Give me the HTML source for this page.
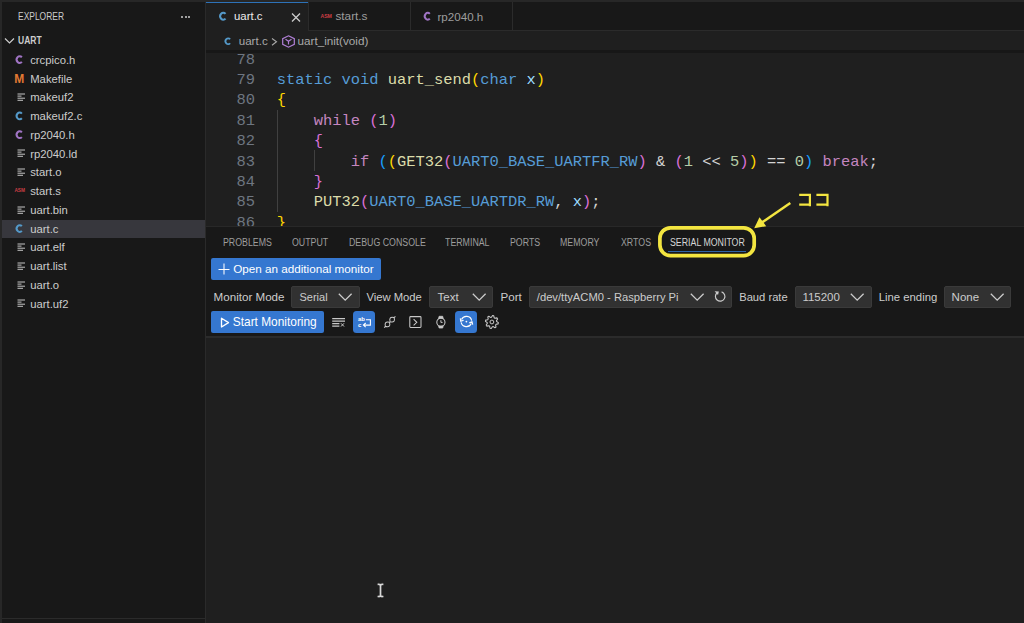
<!DOCTYPE html>
<html><head><meta charset="utf-8">
<style>
*{margin:0;padding:0;box-sizing:border-box}
html,body{width:1024px;height:623px;overflow:hidden;background:#272727;font-family:"Liberation Sans",sans-serif;color:#cccccc}
.a{position:absolute}
.t{position:absolute;white-space:pre;line-height:1}
svg{position:absolute;overflow:visible}
</style></head><body>

<div class="a" style="left:1.5px;top:2px;width:203.5px;height:621px;background:#181818;"></div>
<div class="a" style="left:204.6px;top:2px;width:2px;height:621px;background:#2a2a2a;"></div>
<div class="a" style="left:206px;top:2px;width:818px;height:29px;background:#181818;"></div>
<div class="a" style="left:206px;top:30px;width:818px;height:1px;background:#2b2b2b;"></div>
<div class="a" style="left:206px;top:31px;width:818px;height:196px;background:#1f1f1f;"></div>
<div class="a" style="left:206px;top:227px;width:818px;height:396px;background:#181818;"></div>
<div class="a" style="left:206px;top:225.9px;width:818px;height:1.6px;background:#282828;"></div>
<div class="t" style="left:18.00px;top:11.54px;font-size:10px;color:#cccccc;font-weight:400;font-family:'Liberation Sans',sans-serif;transform:scaleX(0.845);transform-origin:0 0;">EXPLORER</div>
<div class="a" style="left:181.0px;top:16px;width:2px;height:2px;border-radius:1px;background:#cccccc"></div>
<div class="a" style="left:184.7px;top:16px;width:2px;height:2px;border-radius:1px;background:#cccccc"></div>
<div class="a" style="left:188.2px;top:16px;width:2px;height:2px;border-radius:1px;background:#cccccc"></div>
<svg style="left:4px;top:37px" width="12" height="8"><path d="M1 1.5 L5.5 6 L10 1.5" fill="none" stroke="#cccccc" stroke-width="1.2"/></svg>
<div class="t" style="left:18.00px;top:35.94px;font-size:10px;color:#cccccc;font-weight:700;font-family:'Liberation Sans',sans-serif;transform:scaleX(0.85);transform-origin:0 0;">UART</div>
<div class="t" style="left:30.20px;top:54.73px;font-size:11.3px;color:#cccccc;font-weight:400;font-family:'Liberation Sans',sans-serif;">crcpico.h</div>
<svg style="left:0;top:0" width="1024" height="623"><path d="M21.86 57.24 A3.0 3.4 0 1 0 21.86 61.96" fill="none" stroke="#a074c4" stroke-width="2.0"/></svg>
<div class="t" style="left:30.20px;top:73.50px;font-size:11.3px;color:#cccccc;font-weight:400;font-family:'Liberation Sans',sans-serif;">Makefile</div>
<div class="t" style="left:14.20px;top:73.41px;font-size:12px;color:#e37933;font-weight:700;font-family:'Liberation Sans',sans-serif;">M</div>
<div class="t" style="left:30.20px;top:92.27px;font-size:11.3px;color:#cccccc;font-weight:400;font-family:'Liberation Sans',sans-serif;">makeuf2</div>
<svg style="left:17px;top:92.8px" width="9" height="9"><path d="M0.5 1h7.5M0.5 3.1h4M0.5 5.2h7.5M0.5 7.3h5.5" stroke="#c5c5c5" stroke-width="1"/></svg>
<div class="t" style="left:30.20px;top:111.04px;font-size:11.3px;color:#cccccc;font-weight:400;font-family:'Liberation Sans',sans-serif;">makeuf2.c</div>
<svg style="left:0;top:0" width="1024" height="623"><path d="M21.86 113.55 A3.0 3.4 0 1 0 21.86 118.27" fill="none" stroke="#5499c9" stroke-width="2.0"/></svg>
<div class="t" style="left:30.20px;top:129.81px;font-size:11.3px;color:#cccccc;font-weight:400;font-family:'Liberation Sans',sans-serif;">rp2040.h</div>
<svg style="left:0;top:0" width="1024" height="623"><path d="M21.86 132.32 A3.0 3.4 0 1 0 21.86 137.04" fill="none" stroke="#a074c4" stroke-width="2.0"/></svg>
<div class="t" style="left:30.20px;top:148.58px;font-size:11.3px;color:#cccccc;font-weight:400;font-family:'Liberation Sans',sans-serif;">rp2040.ld</div>
<svg style="left:17px;top:149.1px" width="9" height="9"><path d="M0.5 1h7.5M0.5 3.1h4M0.5 5.2h7.5M0.5 7.3h5.5" stroke="#c5c5c5" stroke-width="1"/></svg>
<div class="t" style="left:30.20px;top:167.35px;font-size:11.3px;color:#cccccc;font-weight:400;font-family:'Liberation Sans',sans-serif;">start.o</div>
<svg style="left:17px;top:167.9px" width="9" height="9"><path d="M0.5 1h7.5M0.5 3.1h4M0.5 5.2h7.5M0.5 7.3h5.5" stroke="#c5c5c5" stroke-width="1"/></svg>
<div class="t" style="left:30.20px;top:186.12px;font-size:11.3px;color:#cccccc;font-weight:400;font-family:'Liberation Sans',sans-serif;">start.s</div>
<div class="t" style="left:14.40px;top:189.03px;font-size:4.8px;color:#cc3e44;font-weight:700;font-family:'Liberation Sans',sans-serif;">ASM</div>
<div class="t" style="left:30.20px;top:204.89px;font-size:11.3px;color:#cccccc;font-weight:400;font-family:'Liberation Sans',sans-serif;">uart.bin</div>
<svg style="left:17px;top:205.5px" width="9" height="9"><path d="M0.5 1h7.5M0.5 3.1h4M0.5 5.2h7.5M0.5 7.3h5.5" stroke="#c5c5c5" stroke-width="1"/></svg>
<div class="a" style="left:2px;top:219.5px;width:203px;height:18.5px;background:#37373d;"></div>
<div class="t" style="left:30.20px;top:223.66px;font-size:11.3px;color:#cccccc;font-weight:400;font-family:'Liberation Sans',sans-serif;">uart.c</div>
<svg style="left:0;top:0" width="1024" height="623"><path d="M21.86 226.17 A3.0 3.4 0 1 0 21.86 230.89" fill="none" stroke="#5499c9" stroke-width="2.0"/></svg>
<div class="t" style="left:30.20px;top:242.43px;font-size:11.3px;color:#cccccc;font-weight:400;font-family:'Liberation Sans',sans-serif;">uart.elf</div>
<svg style="left:17px;top:243.0px" width="9" height="9"><path d="M0.5 1h7.5M0.5 3.1h4M0.5 5.2h7.5M0.5 7.3h5.5" stroke="#c5c5c5" stroke-width="1"/></svg>
<div class="t" style="left:30.20px;top:261.20px;font-size:11.3px;color:#cccccc;font-weight:400;font-family:'Liberation Sans',sans-serif;">uart.list</div>
<svg style="left:17px;top:261.8px" width="9" height="9"><path d="M0.5 1h7.5M0.5 3.1h4M0.5 5.2h7.5M0.5 7.3h5.5" stroke="#c5c5c5" stroke-width="1"/></svg>
<div class="t" style="left:30.20px;top:279.97px;font-size:11.3px;color:#cccccc;font-weight:400;font-family:'Liberation Sans',sans-serif;">uart.o</div>
<svg style="left:17px;top:280.5px" width="9" height="9"><path d="M0.5 1h7.5M0.5 3.1h4M0.5 5.2h7.5M0.5 7.3h5.5" stroke="#c5c5c5" stroke-width="1"/></svg>
<div class="t" style="left:30.20px;top:298.74px;font-size:11.3px;color:#cccccc;font-weight:400;font-family:'Liberation Sans',sans-serif;">uart.uf2</div>
<svg style="left:17px;top:299.3px" width="9" height="9"><path d="M0.5 1h7.5M0.5 3.1h4M0.5 5.2h7.5M0.5 7.3h5.5" stroke="#c5c5c5" stroke-width="1"/></svg>
<div class="a" style="left:206px;top:2px;width:101.5px;height:29px;background:#1f1f1f;"></div>
<div class="a" style="left:206px;top:1.5px;width:101.5px;height:1.5px;background:#2d72b8;"></div>
<div class="a" style="left:307.5px;top:2px;width:1px;height:28px;background:#2b2b2b;"></div>
<div class="a" style="left:410px;top:2px;width:1px;height:28px;background:#2b2b2b;"></div>
<div class="a" style="left:511.5px;top:2px;width:1px;height:28px;background:#2b2b2b;"></div>
<svg style="left:0;top:0" width="1024" height="623"><path d="M225.53 13.82 A3.1 3.5 0 1 0 225.53 18.68" fill="none" stroke="#5499c9" stroke-width="2.0"/></svg>
<div class="t" style="left:234.00px;top:11.25px;font-size:11.4px;color:#ececec;font-weight:400;font-family:'Liberation Sans',sans-serif;">uart.c</div>
<svg style="left:291px;top:12.5px" width="10" height="9"><path d="M1 0.5 L9 8.5 M9 0.5 L1 8.5" stroke="#cccccc" stroke-width="1.3"/></svg>
<div class="t" style="left:320.40px;top:14.00px;font-size:5.2px;color:#cc3e44;font-weight:700;font-family:'Liberation Sans',sans-serif;">ASM</div>
<div class="t" style="left:335.40px;top:10.91px;font-size:11.8px;color:#9d9d9d;font-weight:400;font-family:'Liberation Sans',sans-serif;">start.s</div>
<svg style="left:0;top:0" width="1024" height="623"><path d="M429.79 13.89 A2.9 3.4 0 1 0 429.79 18.61" fill="none" stroke="#a074c4" stroke-width="2.0"/></svg>
<div class="t" style="left:437.50px;top:11.08px;font-size:11.6px;color:#9d9d9d;font-weight:400;font-family:'Liberation Sans',sans-serif;">rp2040.h</div>
<svg style="left:0;top:0" width="1024" height="623"><path d="M230.14 39.24 A2.7 2.9 0 1 0 230.14 43.26" fill="none" stroke="#5499c9" stroke-width="1.8"/></svg>
<div class="t" style="left:238.70px;top:34.88px;font-size:11.6px;color:#a9a9a9;font-weight:400;font-family:'Liberation Sans',sans-serif;">uart.c</div>
<svg style="left:271px;top:38px" width="7" height="8"><path d="M1 0.5 L5.5 3.8 L1 7.2" fill="none" stroke="#a9a9a9" stroke-width="1.1"/></svg>
<svg style="left:281.5px;top:34.5px" width="14" height="13"><path d="M6.5 0.8 L12.3 3.6 L12.3 9.4 L6.5 12.2 L0.7 9.4 L0.7 3.6 Z" fill="none" stroke="#b180d7" stroke-width="1.2"/><path d="M3.5 4.3 L6.5 6.3 L9.5 4.3 M6.5 6.3 L6.5 9.5" fill="none" stroke="#b180d7" stroke-width="1.2"/></svg>
<div class="t" style="left:297.50px;top:34.80px;font-size:11.7px;color:#a9a9a9;font-weight:400;font-family:'Liberation Sans',sans-serif;">uart_init(void)</div>
<div class="a" style="left:206px;top:49.5px;width:818px;height:3px;background:#161616;opacity:0.9"></div>
<div class="t" style="left:236.50px;top:52.68px;font-size:15.42px;color:#6e7681;font-weight:400;font-family:'Liberation Mono',monospace;">78</div>
<div class="t" style="left:236.50px;top:73.08px;font-size:15.42px;color:#6e7681;font-weight:400;font-family:'Liberation Mono',monospace;">79</div>
<div class="t" style="left:276.80px;top:73.08px;font-size:15.42px;color:#569cd6;font-weight:400;font-family:'Liberation Mono',monospace;">static</div>
<div class="t" style="left:341.55px;top:73.08px;font-size:15.42px;color:#569cd6;font-weight:400;font-family:'Liberation Mono',monospace;">void</div>
<div class="t" style="left:387.80px;top:73.08px;font-size:15.42px;color:#dcdcaa;font-weight:400;font-family:'Liberation Mono',monospace;">uart_send</div>
<div class="t" style="left:471.05px;top:73.08px;font-size:15.42px;color:#ffd700;font-weight:400;font-family:'Liberation Mono',monospace;">(</div>
<div class="t" style="left:480.30px;top:73.08px;font-size:15.42px;color:#569cd6;font-weight:400;font-family:'Liberation Mono',monospace;">char</div>
<div class="t" style="left:526.55px;top:73.08px;font-size:15.42px;color:#9cdcfe;font-weight:400;font-family:'Liberation Mono',monospace;">x</div>
<div class="t" style="left:535.80px;top:73.08px;font-size:15.42px;color:#ffd700;font-weight:400;font-family:'Liberation Mono',monospace;">)</div>
<div class="t" style="left:236.50px;top:93.48px;font-size:15.42px;color:#6e7681;font-weight:400;font-family:'Liberation Mono',monospace;">80</div>
<div class="t" style="left:276.80px;top:93.48px;font-size:15.42px;color:#ffd700;font-weight:400;font-family:'Liberation Mono',monospace;">{</div>
<div class="t" style="left:236.50px;top:113.88px;font-size:15.42px;color:#6e7681;font-weight:400;font-family:'Liberation Mono',monospace;">81</div>
<div class="t" style="left:313.80px;top:113.88px;font-size:15.42px;color:#c586c0;font-weight:400;font-family:'Liberation Mono',monospace;">while</div>
<div class="t" style="left:369.30px;top:113.88px;font-size:15.42px;color:#da70d6;font-weight:400;font-family:'Liberation Mono',monospace;">(</div>
<div class="t" style="left:378.55px;top:113.88px;font-size:15.42px;color:#b5cea8;font-weight:400;font-family:'Liberation Mono',monospace;">1</div>
<div class="t" style="left:387.80px;top:113.88px;font-size:15.42px;color:#da70d6;font-weight:400;font-family:'Liberation Mono',monospace;">)</div>
<div class="t" style="left:236.50px;top:134.28px;font-size:15.42px;color:#6e7681;font-weight:400;font-family:'Liberation Mono',monospace;">82</div>
<div class="t" style="left:313.80px;top:134.28px;font-size:15.42px;color:#da70d6;font-weight:400;font-family:'Liberation Mono',monospace;">{</div>
<div class="t" style="left:236.50px;top:154.68px;font-size:15.42px;color:#6e7681;font-weight:400;font-family:'Liberation Mono',monospace;">83</div>
<div class="t" style="left:350.80px;top:154.68px;font-size:15.42px;color:#c586c0;font-weight:400;font-family:'Liberation Mono',monospace;">if</div>
<div class="t" style="left:378.55px;top:154.68px;font-size:15.42px;color:#179fff;font-weight:400;font-family:'Liberation Mono',monospace;">(</div>
<div class="t" style="left:387.80px;top:154.68px;font-size:15.42px;color:#ffd700;font-weight:400;font-family:'Liberation Mono',monospace;">(</div>
<div class="t" style="left:397.05px;top:154.68px;font-size:15.42px;color:#dcdcaa;font-weight:400;font-family:'Liberation Mono',monospace;">GET32</div>
<div class="t" style="left:443.30px;top:154.68px;font-size:15.42px;color:#da70d6;font-weight:400;font-family:'Liberation Mono',monospace;">(</div>
<div class="t" style="left:452.55px;top:154.68px;font-size:15.42px;color:#569cd6;font-weight:400;font-family:'Liberation Mono',monospace;">UART0_BASE_UARTFR_RW</div>
<div class="t" style="left:637.55px;top:154.68px;font-size:15.42px;color:#da70d6;font-weight:400;font-family:'Liberation Mono',monospace;">)</div>
<div class="t" style="left:656.05px;top:154.68px;font-size:15.42px;color:#d4d4d4;font-weight:400;font-family:'Liberation Mono',monospace;">&amp;</div>
<div class="t" style="left:674.55px;top:154.68px;font-size:15.42px;color:#da70d6;font-weight:400;font-family:'Liberation Mono',monospace;">(</div>
<div class="t" style="left:683.80px;top:154.68px;font-size:15.42px;color:#b5cea8;font-weight:400;font-family:'Liberation Mono',monospace;">1</div>
<div class="t" style="left:702.30px;top:154.68px;font-size:15.42px;color:#d4d4d4;font-weight:400;font-family:'Liberation Mono',monospace;">&lt;&lt;</div>
<div class="t" style="left:730.05px;top:154.68px;font-size:15.42px;color:#b5cea8;font-weight:400;font-family:'Liberation Mono',monospace;">5</div>
<div class="t" style="left:739.30px;top:154.68px;font-size:15.42px;color:#da70d6;font-weight:400;font-family:'Liberation Mono',monospace;">)</div>
<div class="t" style="left:748.55px;top:154.68px;font-size:15.42px;color:#ffd700;font-weight:400;font-family:'Liberation Mono',monospace;">)</div>
<div class="t" style="left:767.05px;top:154.68px;font-size:15.42px;color:#d4d4d4;font-weight:400;font-family:'Liberation Mono',monospace;">==</div>
<div class="t" style="left:794.80px;top:154.68px;font-size:15.42px;color:#b5cea8;font-weight:400;font-family:'Liberation Mono',monospace;">0</div>
<div class="t" style="left:804.05px;top:154.68px;font-size:15.42px;color:#179fff;font-weight:400;font-family:'Liberation Mono',monospace;">)</div>
<div class="t" style="left:822.55px;top:154.68px;font-size:15.42px;color:#c586c0;font-weight:400;font-family:'Liberation Mono',monospace;">break</div>
<div class="t" style="left:868.80px;top:154.68px;font-size:15.42px;color:#d4d4d4;font-weight:400;font-family:'Liberation Mono',monospace;">;</div>
<div class="t" style="left:236.50px;top:175.08px;font-size:15.42px;color:#6e7681;font-weight:400;font-family:'Liberation Mono',monospace;">84</div>
<div class="t" style="left:313.80px;top:175.08px;font-size:15.42px;color:#da70d6;font-weight:400;font-family:'Liberation Mono',monospace;">}</div>
<div class="t" style="left:236.50px;top:195.48px;font-size:15.42px;color:#6e7681;font-weight:400;font-family:'Liberation Mono',monospace;">85</div>
<div class="t" style="left:313.80px;top:195.48px;font-size:15.42px;color:#dcdcaa;font-weight:400;font-family:'Liberation Mono',monospace;">PUT32</div>
<div class="t" style="left:360.05px;top:195.48px;font-size:15.42px;color:#da70d6;font-weight:400;font-family:'Liberation Mono',monospace;">(</div>
<div class="t" style="left:369.30px;top:195.48px;font-size:15.42px;color:#569cd6;font-weight:400;font-family:'Liberation Mono',monospace;">UART0_BASE_UARTDR_RW</div>
<div class="t" style="left:554.30px;top:195.48px;font-size:15.42px;color:#d4d4d4;font-weight:400;font-family:'Liberation Mono',monospace;">,</div>
<div class="t" style="left:572.80px;top:195.48px;font-size:15.42px;color:#9cdcfe;font-weight:400;font-family:'Liberation Mono',monospace;">x</div>
<div class="t" style="left:582.05px;top:195.48px;font-size:15.42px;color:#da70d6;font-weight:400;font-family:'Liberation Mono',monospace;">)</div>
<div class="t" style="left:591.30px;top:195.48px;font-size:15.42px;color:#d4d4d4;font-weight:400;font-family:'Liberation Mono',monospace;">;</div>
<div class="t" style="left:236.50px;top:215.88px;font-size:15.42px;color:#6e7681;font-weight:400;font-family:'Liberation Mono',monospace;">86</div>
<div class="t" style="left:276.80px;top:215.88px;font-size:15.42px;color:#ffd700;font-weight:400;font-family:'Liberation Mono',monospace;">}</div>
<div class="a" style="left:277px;top:109.5px;width:1px;height:102px;background:#404040;"></div>
<div class="a" style="left:313.5px;top:150.3px;width:1px;height:20.4px;background:#404040;"></div>
<div class="a" style="left:206px;top:227px;width:818px;height:396px;background:#181818;"></div>
<div class="a" style="left:206px;top:225.9px;width:818px;height:1.6px;background:#282828;"></div>
<div class="t" style="left:223.20px;top:237.63px;font-size:10px;color:#9d9d9d;font-weight:400;font-family:'Liberation Sans',sans-serif;transform:scaleX(0.88);transform-origin:0 0;">PROBLEMS</div>
<div class="t" style="left:292.00px;top:237.63px;font-size:10px;color:#9d9d9d;font-weight:400;font-family:'Liberation Sans',sans-serif;transform:scaleX(0.88);transform-origin:0 0;">OUTPUT</div>
<div class="t" style="left:348.60px;top:237.63px;font-size:10px;color:#9d9d9d;font-weight:400;font-family:'Liberation Sans',sans-serif;transform:scaleX(0.88);transform-origin:0 0;">DEBUG CONSOLE</div>
<div class="t" style="left:444.70px;top:237.63px;font-size:10px;color:#9d9d9d;font-weight:400;font-family:'Liberation Sans',sans-serif;transform:scaleX(0.88);transform-origin:0 0;">TERMINAL</div>
<div class="t" style="left:510.00px;top:237.63px;font-size:10px;color:#9d9d9d;font-weight:400;font-family:'Liberation Sans',sans-serif;transform:scaleX(0.88);transform-origin:0 0;">PORTS</div>
<div class="t" style="left:559.60px;top:237.63px;font-size:10px;color:#9d9d9d;font-weight:400;font-family:'Liberation Sans',sans-serif;transform:scaleX(0.88);transform-origin:0 0;">MEMORY</div>
<div class="t" style="left:620.80px;top:237.63px;font-size:10px;color:#9d9d9d;font-weight:400;font-family:'Liberation Sans',sans-serif;transform:scaleX(0.88);transform-origin:0 0;">XRTOS</div>
<div class="t" style="left:669.80px;top:237.63px;font-size:10px;color:#d6d6d6;font-weight:400;font-family:'Liberation Sans',sans-serif;transform:scaleX(0.88);transform-origin:0 0;">SERIAL MONITOR</div>
<div class="a" style="left:668px;top:250.8px;width:78px;height:1.3px;background:#2d63a6;"></div>
<div class="a" style="left:211.3px;top:258.4px;width:169.4px;height:21.4px;background:#3577d0;border-radius:2px"></div>
<svg style="left:218px;top:262.5px" width="12" height="12"><path d="M6 0.5 V11.5 M0.5 6.5 H11.5" stroke="#ffffff" stroke-width="1.05"/></svg>
<div class="t" style="left:233.20px;top:263.30px;font-size:11.7px;color:#ffffff;font-weight:400;font-family:'Liberation Sans',sans-serif;">Open an additional monitor</div>
<div class="t" style="left:213.60px;top:291.28px;font-size:11.6px;color:#cccccc;font-weight:400;font-family:'Liberation Sans',sans-serif;">Monitor Mode</div>
<div class="a" style="left:290.9px;top:285.5px;width:68.80000000000001px;height:22.4px;background:#313131;border-radius:2px;border:1px solid #3a3a3a"></div>
<div class="t" style="left:299.50px;top:292.29px;font-size:11.0px;color:#cccccc;font-weight:400;font-family:'Liberation Sans',sans-serif;">Serial</div>
<svg style="left:337.6px;top:292.8px" width="15" height="9"><path d="M0.8 0.8 L7.2 7.2 L13.6 0.8" fill="none" stroke="#cccccc" stroke-width="1.3"/></svg>
<div class="t" style="left:366.40px;top:291.57px;font-size:11.26px;color:#cccccc;font-weight:400;font-family:'Liberation Sans',sans-serif;">View Mode</div>
<div class="a" style="left:429.2px;top:285.5px;width:64.30000000000001px;height:22.4px;background:#313131;border-radius:2px;border:1px solid #3a3a3a"></div>
<div class="t" style="left:437.60px;top:291.87px;font-size:11.5px;color:#cccccc;font-weight:400;font-family:'Liberation Sans',sans-serif;">Text</div>
<svg style="left:471.7px;top:292.8px" width="15" height="9"><path d="M0.8 0.8 L7.2 7.2 L13.6 0.8" fill="none" stroke="#cccccc" stroke-width="1.3"/></svg>
<div class="t" style="left:500.50px;top:291.28px;font-size:11.6px;color:#cccccc;font-weight:400;font-family:'Liberation Sans',sans-serif;">Port</div>
<div class="a" style="left:529px;top:285.5px;width:203.20000000000005px;height:22.4px;background:#313131;border-radius:2px;border:1px solid #3a3a3a"></div>
<div class="t" style="left:536.80px;top:292.12px;font-size:11.2px;color:#cccccc;font-weight:400;font-family:'Liberation Sans',sans-serif;">/dev/ttyACM0 - Raspberry Pi</div>
<svg style="left:689.5px;top:292.8px" width="15" height="9"><path d="M0.8 0.8 L7.2 7.2 L13.6 0.8" fill="none" stroke="#cccccc" stroke-width="1.3"/></svg>
<svg style="left:0;top:0" width="1024" height="623"><path d="M721.6 291.9 A4.75 4.75 0 1 1 717.2 292.7" fill="none" stroke="#cccccc" stroke-width="1.15"/><path d="M714.6 291.2 L718.9 291.4 L718.0 294.9 Z" fill="#cccccc"/></svg>
<div class="t" style="left:739.20px;top:291.62px;font-size:11.2px;color:#cccccc;font-weight:400;font-family:'Liberation Sans',sans-serif;">Baud rate</div>
<div class="a" style="left:795.2px;top:285.5px;width:76.89999999999998px;height:22.4px;background:#313131;border-radius:2px;border:1px solid #3a3a3a"></div>
<div class="t" style="left:802.40px;top:291.87px;font-size:11.5px;color:#cccccc;font-weight:400;font-family:'Liberation Sans',sans-serif;">115200</div>
<svg style="left:850.4px;top:292.8px" width="15" height="9"><path d="M0.8 0.8 L7.2 7.2 L13.6 0.8" fill="none" stroke="#cccccc" stroke-width="1.3"/></svg>
<div class="t" style="left:878.70px;top:291.51px;font-size:11.33px;color:#cccccc;font-weight:400;font-family:'Liberation Sans',sans-serif;">Line ending</div>
<div class="a" style="left:943.9px;top:285.5px;width:67.5px;height:22.4px;background:#313131;border-radius:2px;border:1px solid #3a3a3a"></div>
<div class="t" style="left:951.60px;top:291.87px;font-size:11.5px;color:#cccccc;font-weight:400;font-family:'Liberation Sans',sans-serif;">None</div>
<svg style="left:989.6px;top:292.8px" width="15" height="9"><path d="M0.8 0.8 L7.2 7.2 L13.6 0.8" fill="none" stroke="#cccccc" stroke-width="1.3"/></svg>
<div class="a" style="left:211.25px;top:310.9px;width:112.5px;height:22.2px;background:#3577d0;border-radius:2px"></div>
<div class="t" style="left:232.80px;top:316.83px;font-size:11.9px;color:#ffffff;font-weight:400;font-family:'Liberation Sans',sans-serif;">Start Monitoring</div>
<div class="a" style="left:353px;top:311px;width:22px;height:22px;background:#3577d0;border-radius:3.5px"></div>
<div class="a" style="left:455px;top:311px;width:22px;height:22px;background:#3577d0;border-radius:3.5px"></div>
<svg style="left:0;top:0" width="1024" height="623"><path d="M221.5 318.2 L228.5 322.6 L221.5 327 Z" fill="none" stroke="#fff" stroke-width="1.35" stroke-linejoin="round"/><path d="M332.2 318.6 H345 M332.2 321.1 H345 M332.2 323.6 H339.4 M332.2 326.1 H339.4" stroke="#c8c8c8" stroke-width="1.1"/><path d="M341 323.3 L344 326.5 M344 323.3 L341 326.5" stroke="#c8c8c8" stroke-width="1"/><text x="357.9" y="321.3" font-size="6" font-family="Liberation Sans" font-weight="700" fill="#fff">ab</text><text x="357.9" y="326.8" font-size="6" font-family="Liberation Sans" font-weight="700" fill="#fff">c</text><path d="M366 319.7 H370.4 V325.1 H363.6 M365.7 323 L363.4 325.1 L365.7 327.2" fill="none" stroke="#fff" stroke-width="1.1"/><path d="M390.08 321.72 Q388.60 316.13 394.18 317.62 Q395.67 323.20 390.08 321.72 Z M394.18 317.62 L395.39 316.41 M389.52 322.28 Q383.93 320.80 385.42 326.38 Q391.00 327.87 389.52 322.28 Z M385.42 326.38 L384.21 327.59 " fill="none" stroke="#c8c8c8" stroke-width="1.05"/><rect x="409.8" y="316.6" width="11.2" height="10.8" rx="0.8" fill="none" stroke="#c8c8c8" stroke-width="1.05"/><path d="M413.6 319.2 L416.8 322.3 L413.6 325.4" fill="none" stroke="#c8c8c8" stroke-width="1.05"/><circle cx="440.9" cy="322.2" r="4.1" fill="none" stroke="#c8c8c8" stroke-width="1.05"/><path d="M438.6 318.6 L439.1 316.3 H442.7 L443.2 318.6 M438.6 325.8 L439.1 328 H442.7 L443.2 325.8" fill="#c8c8c8" stroke="#c8c8c8" stroke-width="0.8"/><path d="M440.9 320.2 V322.4 H442.6" fill="none" stroke="#c8c8c8" stroke-width="1"/><path d="M461.5 319.6 A5.4 5.4 0 0 1 471.7 320.6 M471.3 323.4 A5.4 5.4 0 0 1 461.1 322.4" fill="none" stroke="#fff" stroke-width="1.15"/><path d="M460.3 318.3 L460.8 321.3 L463.6 320.3 M472.7 324.7 L472.0 321.8 L469.3 322.9" fill="none" stroke="#fff" stroke-width="1.15"/><circle cx="466.4" cy="321.6" r="0.9" fill="#fff"/><path d="M491.43,317.22 L492.54,315.53 L493.79,315.78 L494.16,317.77 L494.95,318.29 L496.92,317.88 L497.63,318.94 L496.49,320.61 L496.68,321.53 L498.37,322.64 L498.12,323.89 L496.13,324.26 L495.61,325.05 L496.02,327.02 L494.96,327.73 L493.29,326.59 L492.37,326.78 L491.26,328.47 L490.01,328.22 L489.64,326.23 L488.85,325.71 L486.88,326.12 L486.17,325.06 L487.31,323.39 L487.12,322.47 L485.43,321.36 L485.68,320.11 L487.67,319.74 L488.19,318.95 L487.78,316.98 L488.84,316.27 L490.51,317.41 Z" fill="none" stroke="#c8c8c8" stroke-width="1.05" stroke-linejoin="round"/><circle cx="491.9" cy="322" r="1.9" fill="none" stroke="#c8c8c8" stroke-width="1"/></svg>
<div class="a" style="left:206px;top:336.2px;width:818px;height:1.5px;background:#2b2b2b;"></div>
<div class="a" style="left:206px;top:337.7px;width:818px;height:285.3px;background:#1f1f1f;"></div>
<div class="a" style="left:2px;top:617.5px;width:203px;height:1.5px;background:#2b2b2b;"></div>
<svg style="left:0;top:0" width="1024" height="623"><path d="M378.3 584.3 Q380.5 584.3 380.5 586 V595 Q380.5 596.6 378.3 596.6 M382.7 584.3 Q380.5 584.3 380.5 586 M382.7 596.6 Q380.5 596.6 380.5 595" fill="none" stroke="#3a3a3a" stroke-width="3" stroke-linecap="round"/><path d="M378.3 584.3 Q380.5 584.3 380.5 586 V595 Q380.5 596.6 378.3 596.6 M382.7 584.3 Q380.5 584.3 380.5 586 M382.7 596.6 Q380.5 596.6 380.5 595" fill="none" stroke="#d8d8d8" stroke-width="1.5" stroke-linecap="round"/></svg>
<svg style="left:0;top:0" width="1024" height="623"><rect x="659.9" y="227.8" width="94.3" height="27.8" rx="10.5" ry="10.5" fill="none" stroke="#f3e540" stroke-width="3.7"/><path d="M790.3 202.9 L760 223.8" stroke="#f3e540" stroke-width="2.4"/><path d="M754.2 228.2 L759.5 217.2 L766.2 226.2 Z" fill="#f3e540"/><path d="M799.2 194.8 H809.9 V206.2 M799.2 204.7 H809.9" fill="none" stroke="#f3e540" stroke-width="2.2"/><path d="M816.4 194.8 H827.5 V206.2 M816.4 204.7 H827.5" fill="none" stroke="#f3e540" stroke-width="2.2"/></svg>
</body></html>
